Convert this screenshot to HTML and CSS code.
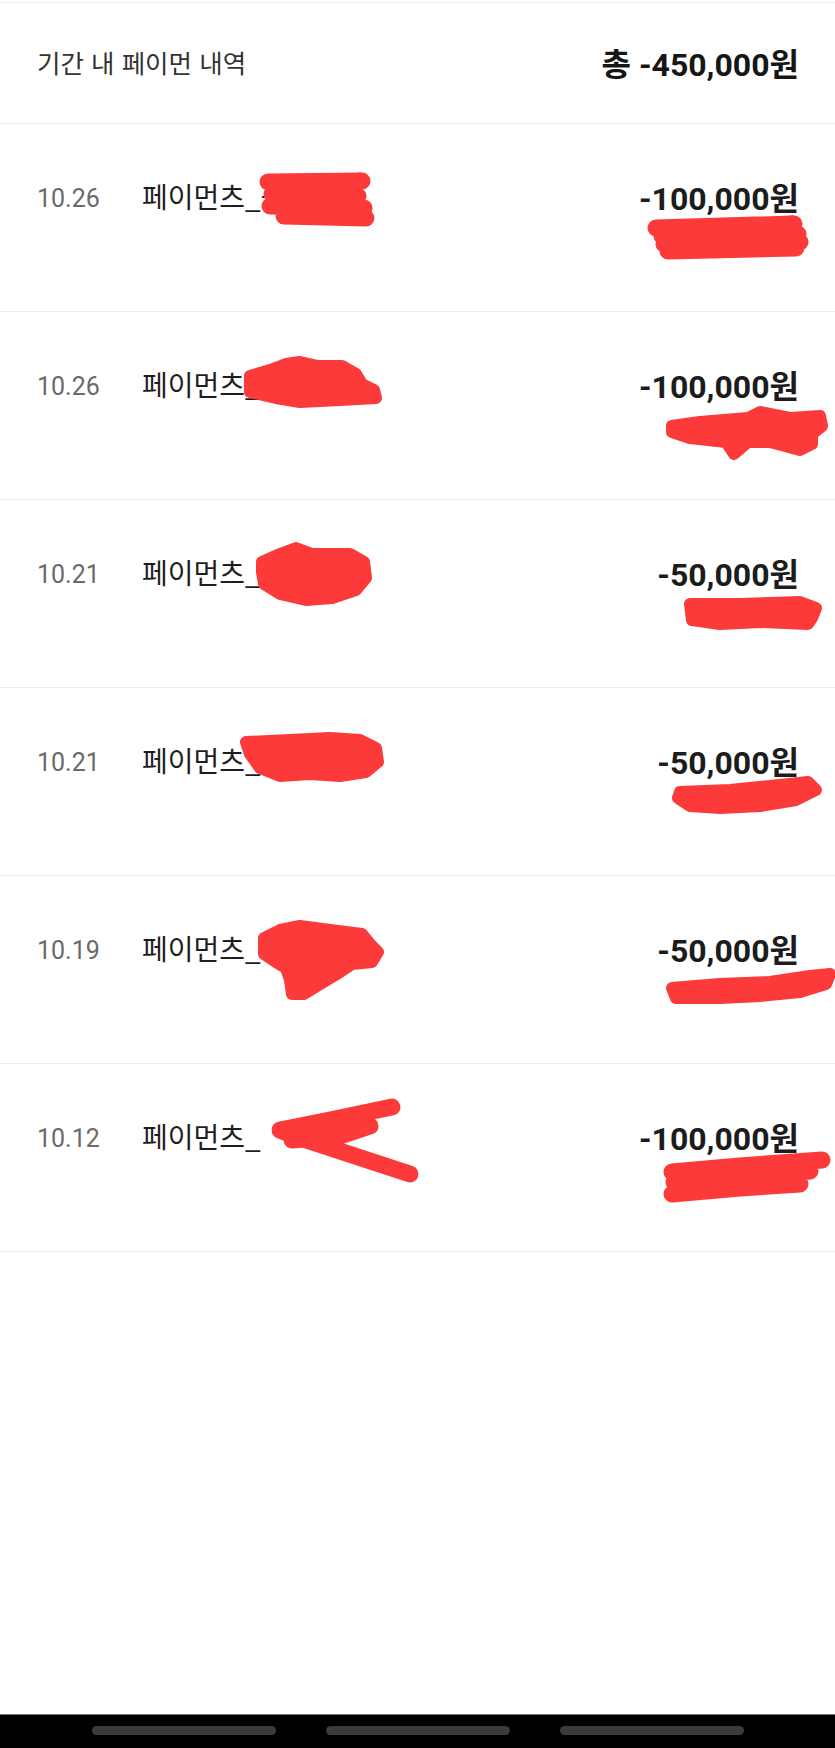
FILE: index.html
```html
<!DOCTYPE html>
<html lang="ko">
<head>
<meta charset="utf-8">
<title>기간 내 페이먼 내역</title>
<link rel="stylesheet" href="styles.css">
</head>
<body>
<div class="screen">
  <div class="top-gap"></div>
  <header class="summary">
    <span class="summary-title">기간 내 페이먼 내역</span>
    <span class="summary-total">총 -450,000원</span>
  </header>

  <ul class="list">
    <li class="row">
      <div class="line">
        <span class="date">10.26</span>
        <span class="name">페이먼츠_-</span>
        <span class="amount">-100,000원</span>
      </div>
      <svg class="scribble" viewBox="0 0 835 188" width="835" height="188">
        <path class="stroke" d="M268 58 L362 57 L272 70 L358 72 L270 82 L364 84 L284 92 L366 94"/>
        <path class="stroke" d="M656 104 L794 100 L662 112 L798 110 L664 120 L800 118 L668 127 L796 124"/>
      </svg>
    </li>
    <li class="row">
      <div class="line">
        <span class="date">10.26</span>
        <span class="name">페이먼츠_</span>
        <span class="amount">-100,000원</span>
      </div>
      <svg class="scribble" viewBox="0 0 835 188" width="835" height="188">
        <path class="blob" d="M250 64 L270 58 L286 52 L300 50 L318 54 L342 54 L356 62 L362 72 L374 78 L376 86 L340 88 L300 90 L276 86 L250 80 Z"/>
        <path class="blob" d="M672 114 L700 110 L748 106 L760 100 L790 106 L820 104 L822 114 L812 122 L812 132 L800 138 L770 130 L748 130 L734 142 L726 130 L690 126 L672 120 Z"/>
      </svg>
    </li>
    <li class="row">
      <div class="line">
        <span class="date">10.21</span>
        <span class="name">페이먼츠_</span>
        <span class="amount">-50,000원</span>
      </div>
      <svg class="scribble" viewBox="0 0 835 188" width="835" height="188">
        <path class="blob" d="M262 62 L280 54 L296 48 L312 54 L350 54 L364 62 L366 78 L356 90 L332 98 L306 100 L280 94 L264 84 L262 72 Z"/>
        <path class="blob" d="M690 104 L740 104 L800 102 L816 108 L812 118 L808 124 L760 122 L720 124 L692 120 Z"/>
      </svg>
    </li>
    <li class="row">
      <div class="line">
        <span class="date">10.21</span>
        <span class="name">페이먼츠_</span>
        <span class="amount">-50,000원</span>
      </div>
      <svg class="scribble" viewBox="0 0 835 188" width="835" height="188">
        <path class="blob" d="M246 54 L290 52 L330 50 L360 52 L376 60 L378 74 L366 84 L340 88 L310 86 L280 88 L260 80 L250 66 Z"/>
        <path class="blob" d="M680 104 L730 102 L770 98 L808 94 L816 102 L796 112 L760 118 L720 120 L690 118 L678 110 Z"/>
      </svg>
    </li>
    <li class="row">
      <div class="line">
        <span class="date">10.19</span>
        <span class="name">페이먼츠_</span>
        <span class="amount">-50,000원</span>
      </div>
      <svg class="scribble" viewBox="0 0 835 188" width="835" height="188">
        <path class="blob" d="M264 62 L280 54 L300 50 L330 54 L362 58 L370 68 L378 76 L372 86 L352 88 L340 96 L320 108 L304 118 L292 118 L290 104 L286 92 L276 86 L264 78 Z"/>
        <path class="blob" d="M672 112 L720 108 L770 106 L810 100 L830 98 L826 108 L800 116 L760 120 L720 122 L676 122 Z"/>
      </svg>
    </li>
    <li class="row">
      <div class="line">
        <span class="date">10.12</span>
        <span class="name">페이먼츠_</span>
        <span class="amount">-100,000원</span>
      </div>
      <svg class="scribble" viewBox="0 0 835 188" width="835" height="188">
        <path class="stroke" d="M392 43 L330 56 L280 66 L300 74 L410 110 M300 64 L370 62 L340 72 L292 76"/>
        <path class="stroke" d="M672 108 L740 102 L822 96 M674 118 L760 111 L810 107 M672 130 L740 124 L800 120"/>
      </svg>
    </li>
  </ul>

  <div class="filler"></div>

  <nav class="navbar">
    <span class="pill"></span>
    <span class="pill"></span>
    <span class="pill"></span>
  </nav>
</div>
</body>
</html>
```

FILE: styles.css
```css
* {
  box-sizing: border-box;
}

html, body {
  margin: 0;
  padding: 0;
  background: #ffffff;
}

body {
  font-family: "Noto Sans CJK KR", "Noto Sans", sans-serif;
  color: #222222;
}

.screen {
  width: 835px;
  min-height: 1748px;
  display: flex;
  flex-direction: column;
}

.top-gap {
  height: 2px;
}

.summary {
  height: 122px;
  border-top: 1px solid #ececec;
  border-bottom: 1px solid #ececec;
  display: flex;
  align-items: center;
  justify-content: space-between;
  padding: 0 36px 2px 37px;
}

.summary-title {
  font-size: 25.5px;
  color: #333333;
  font-weight: 400;
  line-height: 40px;
}

.summary-total {
  font-family: "Roboto", "Noto Sans CJK KR", sans-serif;
  font-size: 32px;
  font-weight: 700;
  color: #161616;
  line-height: 40px;
  padding-top: 6px;
}

.list {
  list-style: none;
  margin: 0;
  padding: 0;
}

.row {
  position: relative;
  height: 188px;
  border-bottom: 1px solid #ececec;
  padding: 52px 36px 0 37px;
}

.line {
  display: flex;
  align-items: center;
  height: 40px;
}

.date {
  font-family: "Roboto", sans-serif;
  font-size: 25px;
  color: #6a6a6a;
  width: 105px;
  flex: none;
  margin-top: 4px;
}

.name {
  font-size: 28px;
  color: #1e1e1e;
  flex: 1;
  white-space: nowrap;
  margin-top: -1px;
}

.amount {
  font-family: "Roboto", "Noto Sans CJK KR", sans-serif;
  font-size: 32px;
  font-weight: 700;
  color: #1c1c1c;
  white-space: nowrap;
}

.scribble {
  position: absolute;
  left: 0;
  top: 0;
  pointer-events: none;
}

.scribble .stroke {
  fill: none;
  stroke: #fd3a3a;
  stroke-width: 17;
  stroke-linecap: round;
  stroke-linejoin: round;
}

.scribble .blob {
  fill: #fd3a3a;
  stroke: #fd3a3a;
  stroke-width: 12;
  stroke-linecap: round;
  stroke-linejoin: round;
}

.filler {
  flex: 1;
}

.navbar {
  height: 34px;
  background: #000000;
  border-top: 1px solid #7a7a7a;
  display: flex;
  justify-content: center;
  align-items: center;
  gap: 50px;
  padding-bottom: 2px;
}

.pill {
  width: 184px;
  height: 9px;
  border-radius: 5px;
  background: #3b3b3b;
}
```
